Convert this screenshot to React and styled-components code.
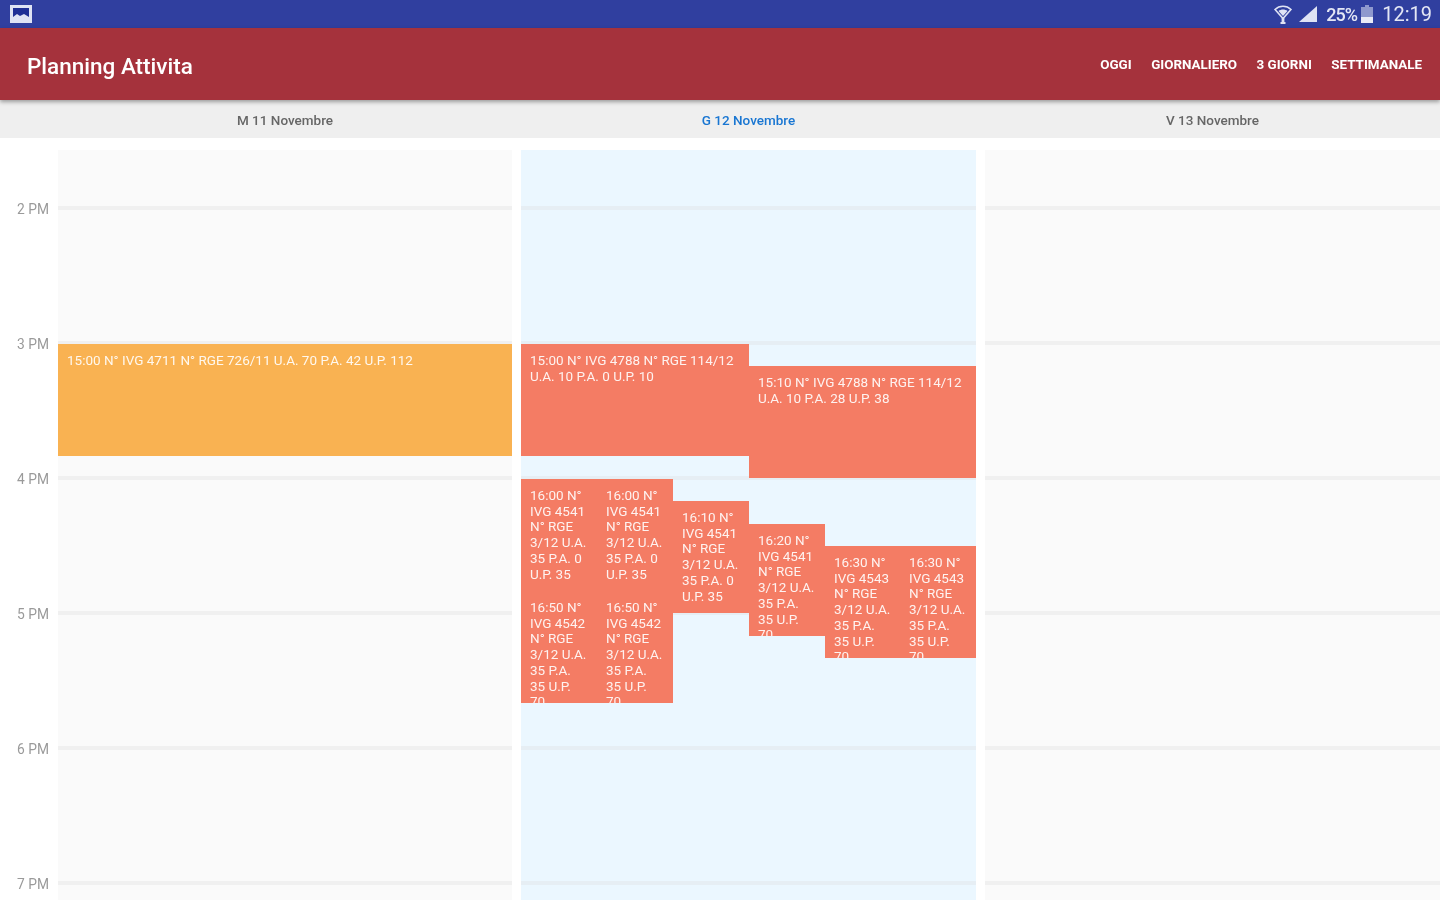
import React from "react";
import styled, { createGlobalStyle } from "styled-components";

const HOUR = 135;
const PX_PER_MIN = HOUR / 60;
const EVENT_HEIGHT = 112;
// bordi delle sei corsie dentro una colonna giorno
const LANES = [0, 76, 152, 228, 304, 379, 455];

const GlobalStyle = createGlobalStyle`
  html, body {
    margin: 0;
    height: 900px;
    overflow: hidden;
    background: #fff;
    font-family: Roboto, "Liberation Sans", sans-serif;
  }
`;

const Page = styled.div`
  width: 1440px;
  height: 900px;
  display: flex;
  flex-direction: column;
  overflow: hidden;
`;

const StatusBar = styled.div`
  height: 28px;
  flex: none;
  background: #303f9f;
  display: flex;
  align-items: center;
  justify-content: space-between;
  padding: 0 8px 0 10px;
  color: #e4e7f5;
`;

const StatusRight = styled.div`
  display: flex;
  align-items: center;
  filter: blur(0.7px);
`;

const StatusPercent = styled.span`
  font-size: 18px;
  font-weight: 500;
  letter-spacing: -0.9px;
  margin: 0 4px 0 9px;
`;

const StatusClock = styled.span`
  font-size: 20px;
  margin-left: 9px;
`;

const Toolbar = styled.header`
  height: 72px;
  flex: none;
  background: #a5323c;
  box-shadow: 0 2px 4px rgba(0, 0, 0, 0.35);
  display: flex;
  align-items: center;
  justify-content: space-between;
  padding: 0 18px 0 27px;
  color: #fff;
  position: relative;
  z-index: 1;
`;

const Title = styled.h1`
  margin: 0;
  padding-top: 3px;
  font-size: 22.5px;
  font-weight: 500;
  filter: blur(0.7px);
`;

const Actions = styled.nav`
  display: flex;
  gap: 19.5px;
  filter: blur(0.7px);
`;

const Action = styled.span`
  font-size: 13.4px;
  font-weight: 700;
`;

const DayHeader = styled.div`
  height: 38px;
  flex: none;
  box-sizing: border-box;
  padding: 2px 0 0 58px;
  background: #efefef;
  display: grid;
  grid-template-columns: 454px 455px 455px;
  column-gap: 9px;
  align-items: center;
`;

const DayTitle = styled.div`
  text-align: center;
  font-size: 13.5px;
  font-weight: 500;
  color: ${(p) => (p.$active ? "#1976d2" : "#666")};
  filter: blur(0.7px);
`;

const Body = styled.main`
  flex: 1;
  min-height: 0;
  padding-top: 12px;
  display: grid;
  grid-template-columns: 58px 1fr;
`;

const Gutter = styled.div`
  padding-top: 51px;
  display: flex;
  flex-direction: column;
`;

const HourLabel = styled.div`
  height: ${HOUR}px;
  flex: none;
  padding-left: 17px;
  font-size: 13.8px;
  line-height: 16px;
  color: #9a9a9a;
  filter: blur(0.6px);
`;

const Days = styled.div`
  display: grid;
  grid-template-columns: 454px 455px 455px;
  column-gap: 9px;
`;

const DayColumn = styled.section`
  position: relative;
  overflow: hidden;
  background: ${(p) => {
    const base = p.$active ? "#ebf7ff" : "#fafafa";
    const line = p.$active ? "#e6eef4" : "#f0f0f0";
    return `repeating-linear-gradient(to bottom, ${base} 0, ${base} ${HOUR - 4}px, ${line} ${HOUR - 4}px, ${line} ${HOUR}px) 0 -75px`;
  }};
`;

const Event = styled.article`
  position: absolute;
  box-sizing: border-box;
  overflow: hidden;
  padding: 9px 9px 0;
  background: ${(p) => (p.$tone === "orange" ? "#f9b252" : "#f47c64")};
  color: rgba(255, 255, 255, 0.9);
  font-size: 13.5px;
  line-height: 15.7px;
`;

const EventText = styled.div`
  filter: blur(0.7px);
`;

const SignalSvg = styled.svg`
  margin-left: 7px;
`;

const GallerySvg = styled.svg`
  filter: blur(0.6px);
`;

// icone della barra di stato
const GalleryIcon = () => (
  <GallerySvg width="22" height="18" viewBox="0 0 22 18">
    <rect x="1.5" y="1.5" width="19" height="15" fill="#1f2f95" stroke="#dfe3f4" strokeWidth="3" />
    <path d="M3 15v-3l4-3 3 2 4-2 5 3v3z" fill="#dfe3f4" />
  </GallerySvg>
);

const WifiIcon = () => (
  <svg width="18" height="21" viewBox="0 0 18 21">
    <path d="M1 5.5C5.5 1.2 12.5 1.2 17 5.5l-8 9z" fill="none" stroke="#dfe3f4" strokeWidth="1.6" />
    <path d="M4.5 7C7 5 11 5 13.5 7L9 12z" fill="#dfe3f4" />
    <rect x="7.6" y="14" width="2.8" height="5.5" fill="#dfe3f4" />
    <rect x="6.5" y="18" width="5" height="2" fill="#dfe3f4" />
  </svg>
);

const SignalIcon = () => (
  <SignalSvg width="18" height="16" viewBox="0 0 18 16">
    <path d="M0 16L18 0v16z" fill="#dfe3f4" />
  </SignalSvg>
);

const BatteryIcon = () => (
  <svg width="12" height="18" viewBox="0 0 12 18">
    <path d="M4 0h4v2h4v16H0V2h4z" fill="#dfe3f4" fillOpacity="0.55" />
    <rect y="12" width="12" height="6" fill="#e9ebf7" />
  </svg>
);

const hours = ["2 PM", "3 PM", "4 PM", "5 PM", "6 PM", "7 PM"];
const actions = ["OGGI", "GIORNALIERO", "3 GIORNI", "SETTIMANALE"];
const days = [
  { title: "M 11 Novembre", events: [
    { start: 60, col: 0, span: 6, tone: "orange", text: "15:00 N° IVG 4711 N° RGE 726/11 U.A. 70 P.A. 42 U.P. 112" },
  ] },
  { title: "G 12 Novembre", active: true, events: [
    { start: 60, col: 0, span: 3, text: "15:00 N° IVG 4788 N° RGE 114/12 U.A. 10 P.A. 0 U.P. 10" },
    { start: 70, col: 3, span: 3, text: "15:10 N° IVG 4788 N° RGE 114/12 U.A. 10 P.A. 28 U.P. 38" },
    { start: 120, col: 0, span: 1, text: "16:00 N° IVG 4541 N° RGE 3/12 U.A. 35 P.A. 0 U.P. 35" },
    { start: 120, col: 1, span: 1, text: "16:00 N° IVG 4541 N° RGE 3/12 U.A. 35 P.A. 0 U.P. 35" },
    { start: 130, col: 2, span: 1, text: "16:10 N° IVG 4541 N° RGE 3/12 U.A. 35 P.A. 0 U.P. 35" },
    { start: 140, col: 3, span: 1, text: "16:20 N° IVG 4541 N° RGE 3/12 U.A. 35 P.A. 35 U.P. 70" },
    { start: 150, col: 4, span: 1, text: "16:30 N° IVG 4543 N° RGE 3/12 U.A. 35 P.A. 35 U.P. 70" },
    { start: 150, col: 5, span: 1, text: "16:30 N° IVG 4543 N° RGE 3/12 U.A. 35 P.A. 35 U.P. 70" },
    { start: 170, col: 0, span: 1, text: "16:50 N° IVG 4542 N° RGE 3/12 U.A. 35 P.A. 35 U.P. 70" },
    { start: 170, col: 1, span: 1, text: "16:50 N° IVG 4542 N° RGE 3/12 U.A. 35 P.A. 35 U.P. 70" },
  ] },
  { title: "V 13 Novembre", events: [] },
];

// start = minuti dalle 14:00, la griglia parte 59px sopra le 14:00
function eventBox({ start, col, span }) {
  return {
    top: Math.floor(59 + start * PX_PER_MIN),
    height: EVENT_HEIGHT,
    left: LANES[col],
    width: LANES[col + span] - LANES[col],
  };
}

export default function App() {
  return (
    <Page>
      <GlobalStyle />
      <StatusBar>
        <GalleryIcon />
        <StatusRight>
          <WifiIcon />
          <SignalIcon />
          <StatusPercent>25%</StatusPercent>
          <BatteryIcon />
          <StatusClock>12:19</StatusClock>
        </StatusRight>
      </StatusBar>
      <Toolbar>
        <Title>Planning Attivita</Title>
        <Actions>
          {actions.map((a) => (
            <Action key={a}>{a}</Action>
          ))}
        </Actions>
      </Toolbar>
      <DayHeader>
        {days.map((d) => (
          <DayTitle key={d.title} $active={d.active}>{d.title}</DayTitle>
        ))}
      </DayHeader>
      <Body>
        <Gutter>
          {hours.map((h) => (
            <HourLabel key={h}>{h}</HourLabel>
          ))}
        </Gutter>
        <Days>
          {days.map((d) => (
            <DayColumn key={d.title} $active={d.active}>
              {d.events.map((e, i) => (
                <Event key={i} $tone={e.tone} style={eventBox(e)}>
                  <EventText>{e.text}</EventText>
                </Event>
              ))}
            </DayColumn>
          ))}
        </Days>
      </Body>
    </Page>
  );
}
